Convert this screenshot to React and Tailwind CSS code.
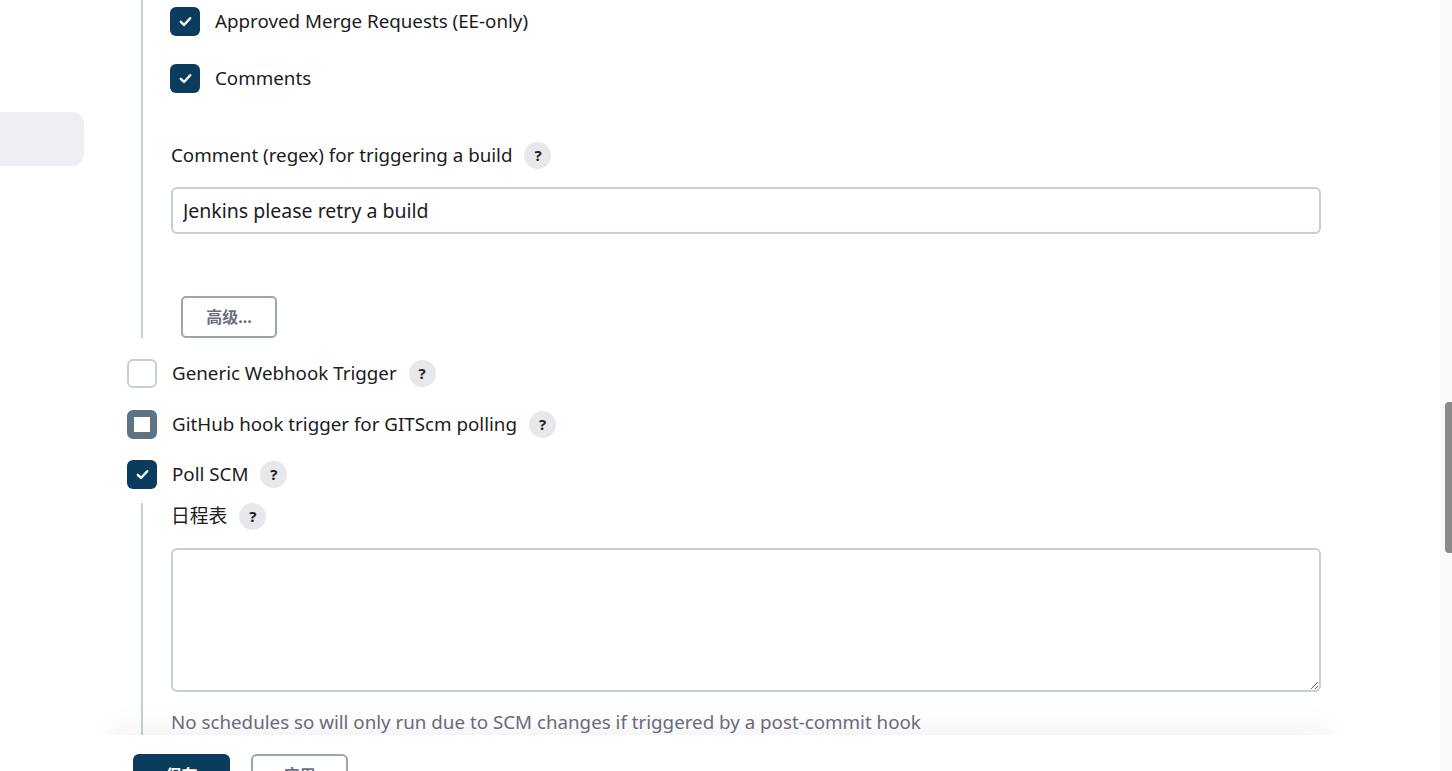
import React from "react";

const font = { fontFamily: '"Noto Sans", "Noto Sans CJK SC", sans-serif' };

function Check() {
  return (
    <svg width="15" height="15" viewBox="0 0 14 14" fill="none">
      <path
        d="M2.6 7.3 5.6 10.2 11.4 3.9"
        stroke="white"
        strokeWidth="2.2"
        strokeLinecap="round"
        strokeLinejoin="round"
      />
    </svg>
  );
}

function Box({ state }) {
  if (state === "on") {
    return (
      <span className="w-[30px] h-[29px] rounded-[6px] bg-[#0b3c5d] flex items-center justify-center shrink-0">
        <Check />
      </span>
    );
  }
  if (state === "focus") {
    return (
      <span className="w-[30px] h-[29px] rounded-[6px] border-[7px] border-[#5e7384] bg-white shrink-0" />
    );
  }
  return (
    <span className="w-[30px] h-[29px] rounded-[6px] border-2 border-[#c6cfd4] bg-white shrink-0" />
  );
}

function Help() {
  return (
    <span className="w-[27px] h-[27px] rounded-full bg-[#e8e8eb] text-[#222] text-[15px] font-bold flex items-center justify-center shrink-0">
      ?
    </span>
  );
}

function Row({ state, label, help, className = "" }) {
  return (
    <div className={"flex items-center h-[29px] " + className}>
      <Box state={state} />
      <span className="ml-[15px] text-[18.75px] text-[#1b1b22] leading-none">{label}</span>
      {help && (
        <span className="ml-[12px]">
          <Help />
        </span>
      )}
    </div>
  );
}

function Label({ text, className = "" }) {
  return (
    <div className={"flex items-center h-[27px] " + className}>
      <span className="text-[18.75px] text-[#1b1b22] leading-none">{text}</span>
      <span className="ml-[12px]">
        <Help />
      </span>
    </div>
  );
}

export default function App() {
  return (
    <div className="relative h-[771px] overflow-hidden bg-white" style={font}>
      <div className="flex h-full">
        <div className="w-[84px] shrink-0">
          <div className="mt-[112px] h-[54px] rounded-r-[12px] bg-[#eeeff4]" />
        </div>

        <div className="ml-[43px] w-[1194px] shrink-0">
          <div className="ml-[14px] border-l-2 border-[#c6cfd4] pl-[27px] pt-[7px]">
            <Row state="on" label="Approved Merge Requests (EE-only)" />
            <Row state="on" label="Comments" className="mt-[28px]" />
            <Label text="Comment (regex) for triggering a build" className="mt-[49px] ml-px" />
            <input
              className="mt-[18px] ml-px w-[1150px] h-[47px] border-2 border-[#c6cfd4] rounded-[6px] px-[10px] text-[19.5px] text-[#1b1b22] outline-none"
              defaultValue="Jenkins please retry a build"
              style={font}
            />
            <button className="mt-[62px] ml-[11px] w-[96px] h-[42px] border-2 border-[#9ba5ae] rounded-[5px] bg-white text-[16px] font-bold text-[#6b6e80] block">
              高级...
            </button>
          </div>

          <Row state="off" label="Generic Webhook Trigger" help className="mt-[21px]" />
          <Row state="focus" label="GitHub hook trigger for GITScm polling" help className="mt-[22px]" />
          <Row state="on" label="Poll SCM" help className="mt-[21px]" />

          <div className="mt-[14px] ml-[14px] border-l-2 border-[#c6cfd4] pl-[28px] pb-[60px]">
            <Label text="日程表" />
            <textarea
              className="mt-[18px] block w-[1150px] h-[144px] border-2 border-[#c6cfd4] rounded-[6px] px-[10px] py-[8px] text-[18.75px] outline-none"
              style={font}
            />
            <div className="mt-[18px] h-[24px] flex items-center text-[18.75px] text-[#6d6c80]">
              No schedules so will only run due to SCM changes if triggered by a post-commit hook
            </div>
          </div>
        </div>

        <div className="flex-1" />
        <div className="w-[12px] shrink-0 bg-[#fafafa]">
          <div className="mt-[402px] ml-[5px] h-[151px] rounded-l-[4px] bg-[#8a8a8a]" />
        </div>
      </div>

      <div className="absolute left-0 right-[12px] bottom-0 h-[36px]">
        <div className="absolute inset-y-0 left-[120px] right-[120px] shadow-[0_0_30px_8px_rgba(0,0,0,0.05)]" />
        <div className="relative h-full bg-white">
          <div className="flex gap-[21px] pl-[133px] pt-[19px]">
            <button className="w-[97px] h-[42px] rounded-[6px] bg-[#0b3c5d] text-white text-[16px] font-bold">
              保存
            </button>
            <button className="w-[97px] h-[42px] rounded-[6px] border-2 border-[#9ba5ae] bg-white text-[#6b6e80] text-[16px] font-bold">
              应用
            </button>
          </div>
        </div>
      </div>
    </div>
  );
}
